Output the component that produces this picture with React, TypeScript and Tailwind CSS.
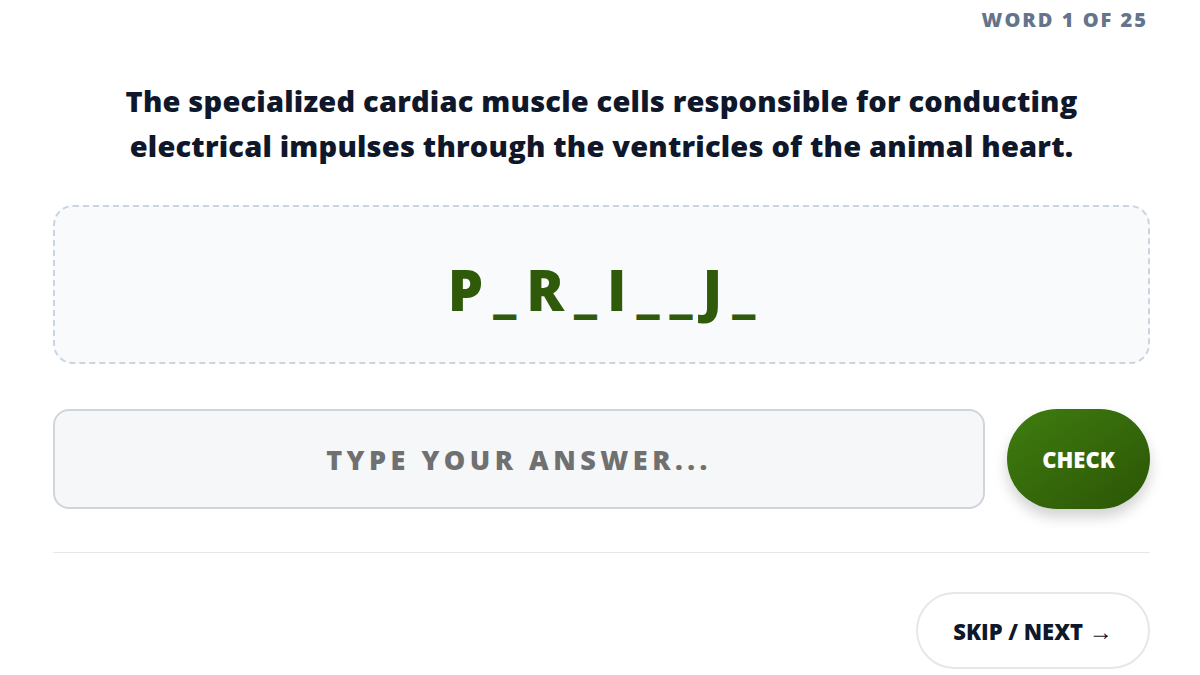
const PATTERN = "P_R_I__J_";

export default function App() {
  const font = { fontFamily: '"Open Sans", "Noto Sans", sans-serif' };
  return (
    <div className="w-[1200px] h-[675px] bg-white overflow-hidden" style={font}>
      <div className="pl-[53px] pr-[50px] pt-[7px] flex flex-col">
        <div className="flex justify-end pr-[2px]">
          <span className="text-[20px] font-extrabold tracking-[2px] text-[#64748b] leading-[26px]">
            WORD 1 OF 25
          </span>
        </div>

        <h1 className="mt-[45px] text-center text-[29px] font-extrabold tracking-[0.2px] leading-[45px] text-[#0f172a] px-[40px]">
          The specialized cardiac muscle cells responsible for conducting electrical impulses through the ventricles of the animal heart.
        </h1>

        <div className="mt-[37px] h-[159px] rounded-[20px] border-2 border-dashed border-[#cbd5e1] bg-[#f8fafc] flex items-center justify-center pt-[8px]">
          <div className="flex items-baseline gap-[10px] text-[#2f5a0a] font-extrabold leading-none">
            {PATTERN.split("").map((ch, i) =>
              ch === "_" ? (
                <span key={i} className="text-[46px]">_</span>
              ) : (
                <span key={i} className="text-[56px]">{ch}</span>
              )
            )}
          </div>
        </div>

        <div className="mt-[45px] flex gap-[22px] items-stretch">
          <input
            type="text"
            placeholder="TYPE YOUR ANSWER..."
            className="flex-1 h-[100px] rounded-[16px] border-2 border-[#d1d5db] bg-[#f5f7f9] text-center text-[27px] font-extrabold tracking-[4.5px] text-[#374151] placeholder:text-[#707070] outline-none"
            style={font}
          />
          <button
            className="w-[143px] h-[100px] rounded-full bg-gradient-to-br from-[#3f7d10] to-[#2c5506] text-white text-[22px] font-extrabold shadow-[0_8px_14px_rgba(0,0,0,0.18)]"
            style={font}
          >
            CHECK
          </button>
        </div>

        <div className="mt-[43px] h-px bg-[#e5e7eb]" />

        <div className="mt-[39px] flex justify-end">
          <button
            className="w-[234px] h-[77px] rounded-full border-2 border-[#e5e7eb] bg-white text-[22px] font-extrabold text-[#0f172a]"
            style={font}
          >
            SKIP / NEXT <span className="text-[24px]">→</span>
          </button>
        </div>
      </div>
    </div>
  );
}
